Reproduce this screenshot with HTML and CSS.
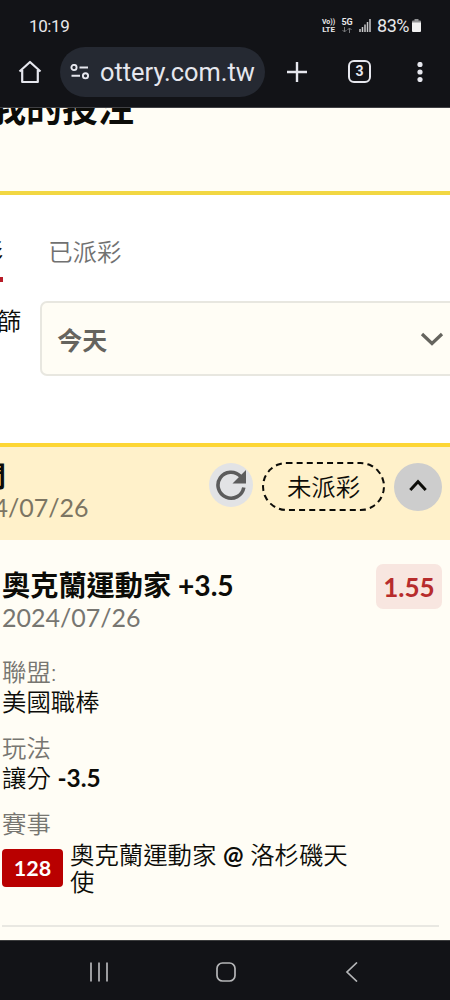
FILE: index.html
```html
<!DOCTYPE html>
<html lang="zh-Hant">
<head>
  <meta charset="UTF-8">
  <meta name="viewport" content="width=device-width, initial-scale=1.0">
  <title>我的投注</title>
  <link rel="stylesheet" href="styles.css">
</head>
<body>
  <!-- Status bar -->
  <div class="status-bar">
    <span class="clock">10:19</span>
    <div class="status-icons">
      <div class="volte"><span>Vo))</span><span class="lte">LTE</span></div>
      <div class="network">
        <span>5G</span>
        <svg width="10" height="6" viewBox="0 0 10 6"><path d="M2.5 0v5M0.5 3l2 2 2-2M7.5 6V1M5.5 3l2-2 2 2" /></svg>
      </div>
      <svg class="signal" width="12" height="13" viewBox="0 0 12 13">
        <path d="M1 10v3M3.5 8v5M6 5.500v7.500M8.500 3v10M11 0v13" />
      </svg>
      <span class="percent">83%</span>
      <svg class="battery" width="9" height="13" viewBox="0 0 9 13">
        <path d="M2.500 0h4v1.500H8a1 1 0 0 1 1 1V4H0V2.500a1 1 0 0 1 1-1h1.500z" fill="#929395" />
        <path d="M0 3.500h9V12a1 1 0 0 1-1 1H1a1 1 0 0 1-1-1z" fill="#f2f2f2" />
      </svg>
    </div>
  </div>

  <!-- Browser toolbar -->
  <div class="toolbar">
    <svg class="home" width="24" height="24" viewBox="0 0 24 24">
      <path d="M1.500 11.500L12 2l10.500 9.500M4.200 10v12h15.600V10" />
    </svg>
    <div class="url-bar">
      <svg width="20" height="16" viewBox="0 0 20 16">
        <circle cx="4" cy="3.500" r="2.600" />
        <circle cx="15.500" cy="11.800" r="2.600" />
        <path d="M9.500 3.500H18M1.500 11.800H10" />
      </svg>
      <span>ottery.com.tw</span>
    </div>
    <svg class="plus" width="20" height="20" viewBox="0 0 20 20"><path d="M10 0v20M0 10h20" /></svg>
    <div class="tab-count">3</div>
    <svg class="more" width="6" height="20" viewBox="0 0 6 20">
      <circle cx="3" cy="2.500" r="2.600" />
      <circle cx="3" cy="10" r="2.600" />
      <circle cx="3" cy="17.500" r="2.600" />
    </svg>
  </div>

  <!-- Page -->
  <div class="page">
    <div class="page-header">
      <h1>我的投注</h1>
    </div>

    <div class="filters">
      <div class="tabs">
        <div class="tab active">未派彩</div>
        <div class="tab">已派彩</div>
      </div>
      <div class="filter-row">
        <span class="filter-label">日期篩</span>
        <div class="select">
          <span>今天</span>
          <svg width="24" height="16" viewBox="0 0 24 16"><path d="M2 3l10 9.500L22 3" /></svg>
        </div>
      </div>
    </div>

    <div class="bet-header">
      <div class="bet-time">
        <div class="bet-time-label">投注時間</div>
        <div class="bet-date">2024/07/26</div>
      </div>
      <div class="refresh">
        <svg width="32" height="32" viewBox="0 0 32 32">
          <path class="arc" d="M28.800 18.500A13 13 0 1 1 25.500 7.300" />
          <path class="head" d="M31 1V14.500H17.500z" />
        </svg>
      </div>
      <div class="pill">未派彩</div>
      <div class="toggle">
        <svg width="18" height="13" viewBox="0 0 18 13"><path d="M1.300 11L9 2.800 16.700 11" /></svg>
      </div>
    </div>

    <div class="bet">
      <div class="bet-top">
        <div>
          <div class="bet-title">奧克蘭運動家 +3.5</div>
          <div class="date">2024/07/26</div>
        </div>
        <div class="odds">1.55</div>
      </div>

      <div class="info">
        <div class="label">聯盟:</div>
        <div class="value">美國職棒</div>
      </div>
      <div class="info">
        <div class="label">玩法</div>
        <div class="value">讓分 <b>-3.5</b></div>
      </div>
      <div class="info">
        <div class="label">賽事</div>
        <div class="match">
          <span class="match-no">128</span>
          <span class="teams">奧克蘭運動家 <b>@</b> 洛杉磯天使</span>
        </div>
      </div>
    </div>
  </div>

  <!-- System navigation -->
  <div class="nav-bar">
    <svg width="20" height="20" viewBox="0 0 20 20"><path d="M2 .5v19M10 .5v19M18 .5v19" /></svg>
    <svg width="20" height="20" viewBox="0 0 20 20"><rect x="1" y="1" width="18" height="18" rx="5.500" /></svg>
    <svg width="20" height="20" viewBox="0 0 20 20"><path d="M15 .5L5 10l10 9.500" /></svg>
  </div>
</body>
</html>
```
FILE: styles.css
```css
/* General Styles */
* {
  box-sizing: border-box;
}
body {
  margin: 0;
  width: 450px;
  height: 1000px;
  overflow: hidden;
  display: flex;
  flex-direction: column;
  background-color: #fffdf5;
  color: #0c0c08;
  font-family: Lato, "Noto Sans CJK TC", sans-serif;
  font-size: 24.400px;
  font-weight: 350;
  white-space: nowrap;
}
svg {
  display: block;
  flex: none;
  fill: none;
}

/* Status bar */
.status-bar {
  flex: none;
  height: 47px;
  padding: 4px 29px 0 29px;
  display: flex;
  align-items: center;
  justify-content: space-between;
  background-color: #121317;
  color: #e8e8ea;
  font-family: Roboto, sans-serif;
  font-weight: 400;
}
.clock {
  font-size: 17px;
  letter-spacing: -0.4px;
}
.status-icons {
  display: flex;
  align-items: center;
}
.volte,
.network {
  display: flex;
  flex-direction: column;
  align-items: center;
  font-weight: 700;
  line-height: 7px;
}
.volte {
  width: 13px;
  margin-right: 6px;
  font-size: 7px;
}
.volte .lte {
  font-size: 8px;
}
.network {
  width: 12px;
  margin-right: 6px;
  font-size: 9px;
}
.network svg {
  stroke: #77787b;
  margin-top: 1px;
}
.signal {
  stroke: #c8c8ca;
  stroke-width: 1.500;
  margin-right: 6px;
}
.percent {
  font-size: 18px;
  letter-spacing: -0.5px;
  margin-right: 3px;
}

/* Browser toolbar */
.toolbar {
  flex: none;
  height: 61px;
  padding: 0 27px 11px 18px;
  display: flex;
  align-items: center;
  background-color: #121317;
  border-bottom: 1px solid #414145;
  stroke: #e6e7ee;
  color: #e6e7ee;
  font-family: Roboto, sans-serif;
  font-weight: 400;
}
.home {
  stroke-width: 2.200;
  stroke-linejoin: round;
}
.url-bar {
  width: 205px;
  height: 50px;
  margin-left: 18px;
  padding-left: 10px;
  display: flex;
  align-items: center;
  gap: 10px;
  border-radius: 25px;
  background-color: #252932;
  font-size: 25.400px;
}
.url-bar svg {
  stroke-width: 1.900;
}
.plus {
  margin-left: 22px;
  stroke-width: 2.400;
}
.tab-count {
  width: 23px;
  height: 23px;
  margin-left: 41px;
  border: 2.500px solid #e6e7ee;
  border-radius: 6px;
  font-size: 14px;
  font-weight: 700;
  line-height: 19px;
  text-align: center;
}
.more {
  margin-left: auto;
  fill: #e6e7ee;
  stroke: none;
}

/* Page */
.page {
  flex: 1;
  overflow: hidden;
}
.page-header {
  display: flow-root;
  height: 87px;
  border-bottom: 4px solid #f2d742;
}
.page-header h1 {
  margin: -18px 0 0 -10px;
  font-size: 36px;
  line-height: 36px;
  font-weight: 700;
}

/* Filters */
.filters {
  height: 248px;
  padding-top: 38px;
  background-color: #fff;
}
.tabs {
  display: flex;
  gap: 45px;
  margin-left: -70px;
}
.tab {
  height: 49px;
  line-height: 38px;
  color: #717171;
}
.tab.active {
  border-bottom: 5px solid #b71c28;
  color: #0c0c08;
}
.filter-row {
  margin: 19px 0 0 -52px;
  display: flex;
  align-items: flex-start;
  gap: 19px;
}
.filter-label {
  line-height: 39px;
}
.select {
  width: 430px;
  height: 75px;
  flex: none;
  padding: 0 0 0 15px;
  display: flex;
  align-items: center;
  border: 2px solid #e8e7e0;
  border-radius: 7px;
  background-color: #fffdf5;
  color: #65645e;
  font-size: 25px;
  font-weight: 700;
}
.select svg {
  margin-left: 313px;
  stroke: #65645e;
  stroke-width: 3.200;
}

/* Bet header */
.bet-header {
  height: 97px;
  padding: 16px 8px 0 0;
  display: flex;
  align-items: flex-start;
  border-top: 4px solid #fdd634;
  background-color: #fff1ca;
}
.bet-time {
  width: 209px;
  margin-top: -1px;
  margin-left: -50px;
  margin-right: 50px;
}
.bet-time-label {
  margin-left: -56px;
  font-size: 28px;
  line-height: 29px;
  font-weight: 700;
}
.bet-date {
  font-size: 25px;
  line-height: 32px;
  font-weight: 400;
  color: #7c7563;
}
.refresh {
  width: 44px;
  height: 44px;
  flex: none;
  display: flex;
  align-items: center;
  justify-content: center;
  border-radius: 50%;
  background-color: #e2e3e5;
}
.refresh .arc {
  stroke: #5c5c5c;
  stroke-width: 3.600;
}
.refresh .head {
  fill: #5c5c5c;
}
.pill {
  width: 123px;
  height: 49px;
  flex: none;
  margin: -1px 9px 0;
  border: 2px dashed #0c0c08;
  border-radius: 25px;
  line-height: 45px;
  text-align: center;
}
.toggle {
  width: 48px;
  height: 48px;
  flex: none;
  padding-bottom: 3px;
  display: flex;
  align-items: center;
  justify-content: center;
  border-radius: 50%;
  background-color: #cdcdcd;
}
.toggle svg {
  stroke: #0c0c08;
  stroke-width: 3;
}

/* Bet */
.bet {
  height: 387px;
  margin: 0 11px 0 2px;
  padding-top: 24px;
  border-bottom: 2px solid #e9e8e2;
}
.bet-top {
  display: flex;
  align-items: flex-start;
  justify-content: space-between;
  margin-right: -3px;
}
.bet-title {
  margin-top: 6px;
  font-size: 28.200px;
  line-height: 31px;
  font-weight: 700;
}
.date {
  font-size: 25px;
  line-height: 32px;
  font-weight: 400;
  color: #777671;
}
.odds {
  width: 66px;
  height: 45px;
  border-radius: 7px;
  background-color: #f8e6e0;
  color: #b72c2c;
  font-size: 26px;
  line-height: 46px;
  font-weight: 700;
  text-align: center;
}
.info {
  margin-top: 16px;
  line-height: 30px;
}
.bet-top + .info {
  margin-top: 24px;
}
.label {
  color: #777671;
}
.value b,
.teams b {
  font-weight: 700;
}
.match {
  margin-top: 2px;
  display: flex;
  align-items: center;
  gap: 7px;
}
.match-no {
  width: 61px;
  height: 38px;
  flex: none;
  border-radius: 4px;
  background-color: #b90000;
  color: #fff;
  font-size: 21.500px;
  line-height: 38px;
  font-weight: 700;
  text-align: center;
}
.teams {
  width: 285px;
  line-height: 27px;
  white-space: normal;
}

/* System navigation */
.nav-bar {
  flex: none;
  height: 60px;
  padding: 3px 88px 0 89px;
  display: flex;
  align-items: center;
  justify-content: space-between;
  background-color: #121317;
  border-top: 1px solid #3c3d3e;
  stroke: #b5b6b8;
  stroke-width: 1.700;
}
```
